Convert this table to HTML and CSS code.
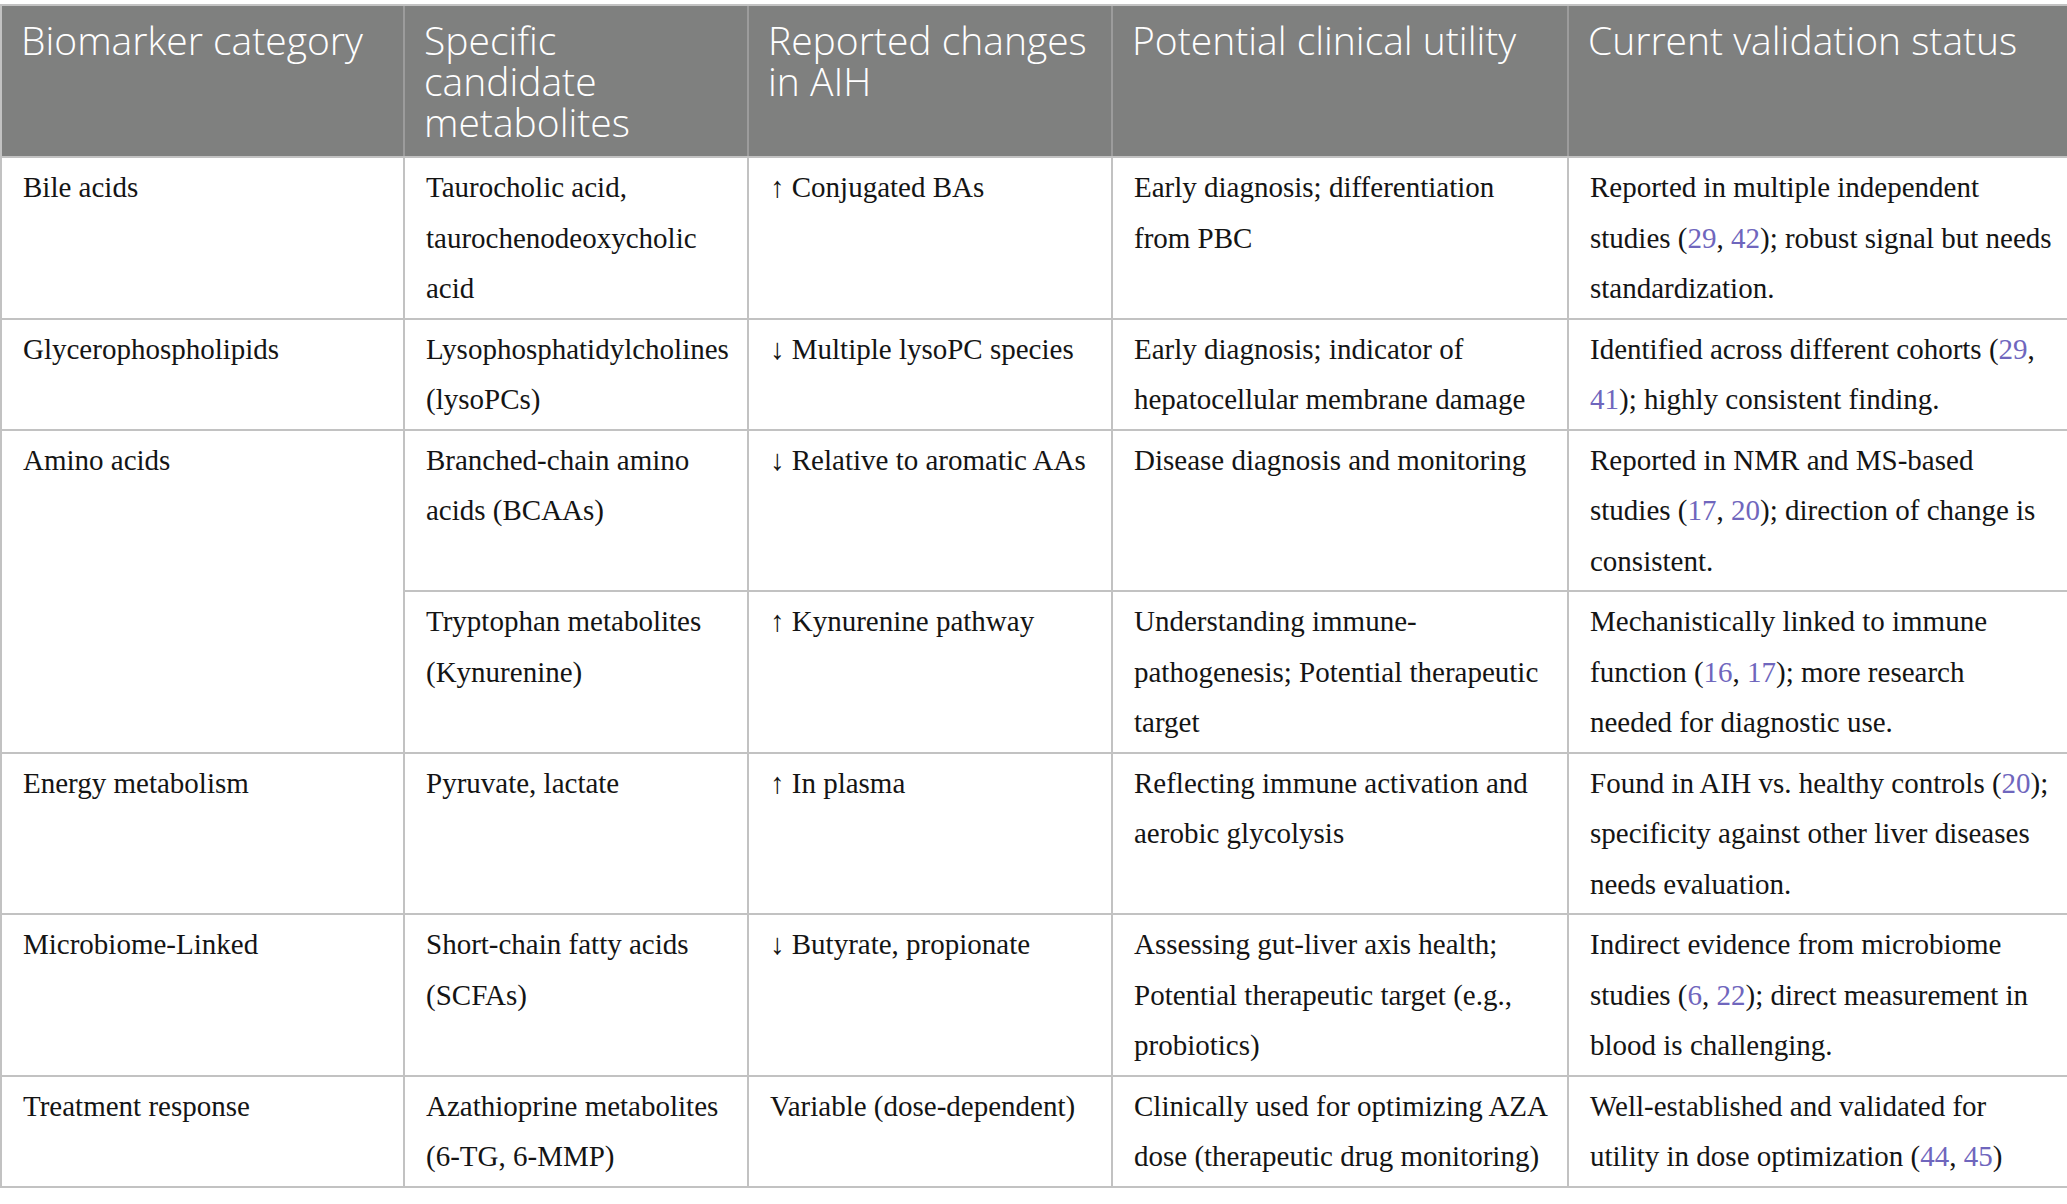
FILE: index.html
```html
<!DOCTYPE html>
<html lang="en">
<head>
<meta charset="utf-8">
<title>Metabolite biomarkers in AIH</title>
<link rel="stylesheet" href="styles.css">
</head>
<body>
<div class="page">
<table class="bio-table">
  <colgroup>
    <col class="c1"><col class="c2"><col class="c3"><col class="c4"><col class="c5">
  </colgroup>
  <thead>
    <tr>
      <th>Biomarker category</th>
      <th>Specific candidate metabolites</th>
      <th>Reported changes in AIH</th>
      <th>Potential clinical utility</th>
      <th>Current validation status</th>
    </tr>
  </thead>
  <tbody>
    <tr>
      <td>Bile acids</td>
      <td>Taurocholic acid, taurochenodeoxycholic acid</td>
      <td>↑ Conjugated BAs</td>
      <td>Early diagnosis; differentiation from PBC</td>
      <td>Reported in multiple independent studies (<a class="ref">29</a>, <a class="ref">42</a>); robust signal but needs standardization.</td>
    </tr>
    <tr>
      <td>Glycerophospholipids</td>
      <td>Lysophosphatidylcholines (lysoPCs)</td>
      <td>↓ Multiple lysoPC species</td>
      <td>Early diagnosis; indicator of hepatocellular membrane damage</td>
      <td>Identified across different cohorts (<a class="ref">29</a>, <a class="ref">41</a>); highly consistent finding.</td>
    </tr>
    <tr>
      <td rowspan="2">Amino acids</td>
      <td>Branched-chain amino acids (BCAAs)</td>
      <td>↓ Relative to aromatic AAs</td>
      <td>Disease diagnosis and monitoring</td>
      <td>Reported in NMR and MS-based studies (<a class="ref">17</a>, <a class="ref">20</a>); direction of change is consistent.</td>
    </tr>
    <tr>
      <td>Tryptophan metabolites (Kynurenine)</td>
      <td>↑ Kynurenine pathway</td>
      <td>Understanding immune-pathogenesis; Potential therapeutic target</td>
      <td>Mechanistically linked to immune function (<a class="ref">16</a>, <a class="ref">17</a>); more research<br>needed for diagnostic use.</td>
    </tr>
    <tr>
      <td>Energy metabolism</td>
      <td>Pyruvate, lactate</td>
      <td>↑ In plasma</td>
      <td>Reflecting immune activation and aerobic glycolysis</td>
      <td>Found in AIH vs. healthy controls (<a class="ref">20</a>); specificity against other liver diseases needs evaluation.</td>
    </tr>
    <tr>
      <td>Microbiome-Linked</td>
      <td>Short-chain fatty acids (SCFAs)</td>
      <td>↓ Butyrate, propionate</td>
      <td>Assessing gut-liver axis health; Potential therapeutic target (e.g., probiotics)</td>
      <td>Indirect evidence from microbiome studies (<a class="ref">6</a>, <a class="ref">22</a>); direct measurement in blood is challenging.</td>
    </tr>
    <tr>
      <td>Treatment response</td>
      <td>Azathioprine metabolites (6-TG, 6-MMP)</td>
      <td>Variable (dose-dependent)</td>
      <td>Clinically used for optimizing AZA dose (therapeutic drug monitoring)</td>
      <td>Well-established and validated for utility in dose optimization (<a class="ref">44</a>, <a class="ref">45</a>)</td>
    </tr>
  </tbody>
</table>
</div>
</body>
</html>
```

FILE: styles.css
```css
html, body {
  margin: 0;
  padding: 0;
  background: #ffffff;
}

.page {
  padding-top: 4px;
  width: 2067px;
}

.bio-table {
  width: 2067px;
  table-layout: fixed;
  border-collapse: collapse;
  border: 2px solid #c2c2c2;
}

.c1 { width: 403px; }
.c2 { width: 344px; }
.c3 { width: 364px; }
.c4 { width: 456px; }
.c5 { width: 500px; }

.bio-table th {
  background: #7f807f;
  color: #ffffff;
  font-family: "Open Sans", "Noto Sans", sans-serif;
  font-weight: 300;
  font-size: 39px;
  line-height: 41px;
  text-align: left;
  vertical-align: top;
  padding: 13px 14px 14px 19px;
  border-left: 2px solid #9c9c9c;
  border-top: 2px solid #c2c2c2;
  border-bottom: 2px solid #c2c2c2;
}

.bio-table th:first-child {
  border-left: 2px solid #c2c2c2;
}

.bio-table td {
  font-family: "Liberation Serif", "Times New Roman", serif;
  font-size: 29px;
  line-height: 50.5px;
  color: #141414;
  vertical-align: top;
  padding: 4px 10px 4px 21px;
  border: 2px solid #c2c2c2;
}

.ref {
  color: #6f66bd;
  text-decoration: none;
}
```
